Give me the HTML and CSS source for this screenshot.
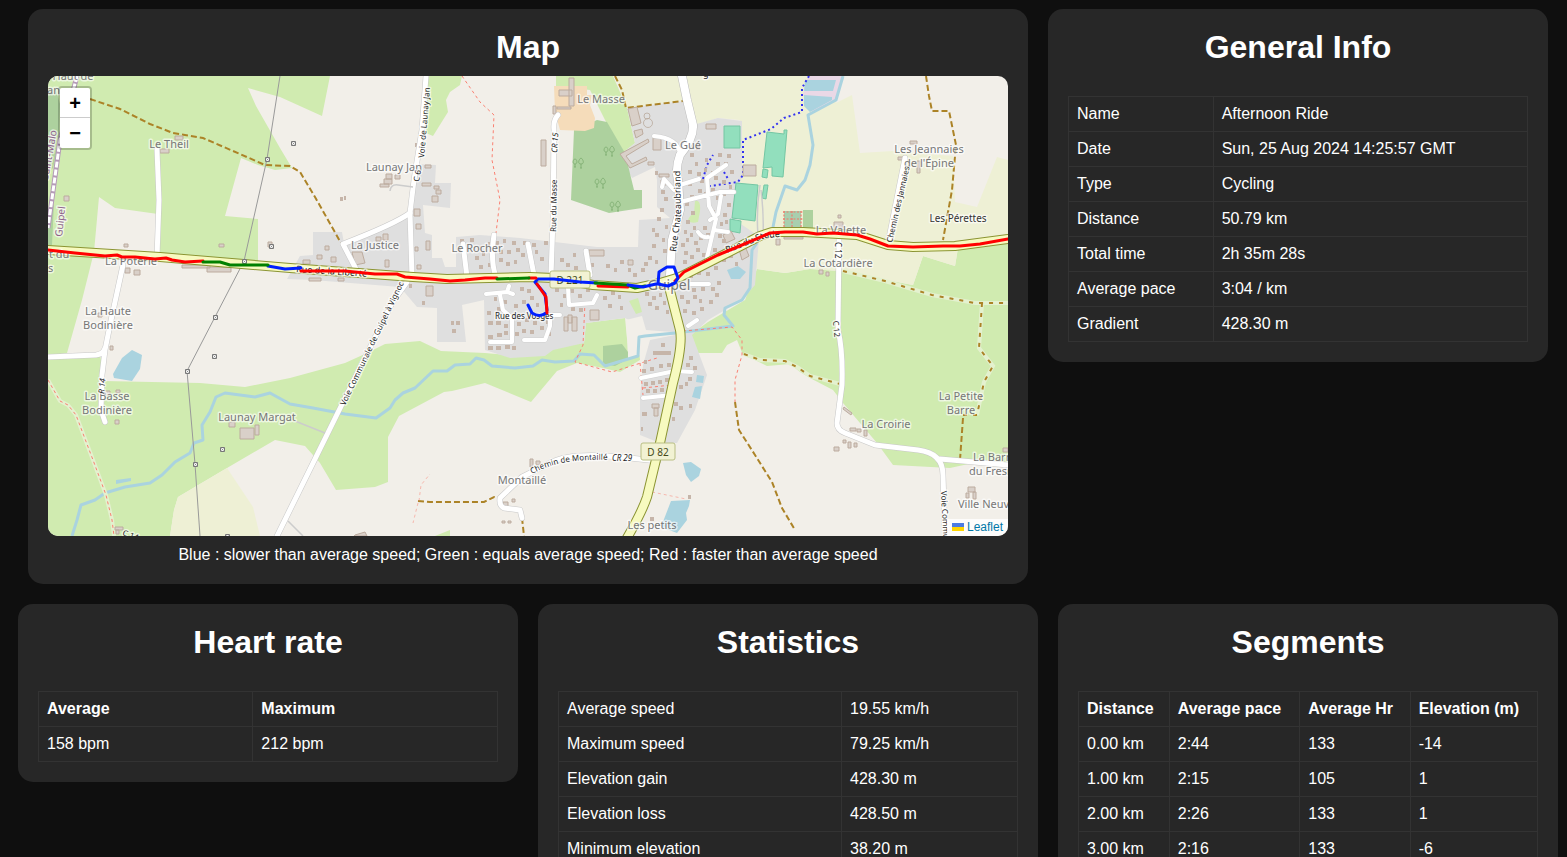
FILE: index.html
```html
<!DOCTYPE html>
<html lang="en">
<head>
<meta charset="utf-8">
<meta name="viewport" content="width=device-width, initial-scale=1">
<title>Afternoon Ride</title>
<link rel="stylesheet" href="styles.css">
</head>
<body>
<main class="page">
  <div class="row row-top">
    <section class="card">
      <h1>Map</h1>
      <div class="map">
        <svg class="map-canvas" viewBox="48 76 960 460" preserveAspectRatio="xMidYMid slice" role="img" aria-label="Map of the ride around Guipel">
          <defs>
            <g id="pylon"><path d="M-1.500-1.500h4v4h-4z" fill="#f6f6f6" stroke="#777"/><path d="M-.5-.5l2 2M1.500-.5l-2 2" stroke="#888" stroke-width=".8"/></g>
            <g id="trees" fill="none" stroke="#7fae72" stroke-width=".9"><path d="M0 0v-3M-1 0h2M0-3c-3 0-2-5 0-5s3 5 0 5M6 1v-4M5 1h2M6-3c-4 0-2-5 0-6 2 1 4 6 0 6"/></g>
            <g id="minor-roads">
              <path d="M426 76L422 130 414 180 410 213 412 277"/>
              <path d="M410 213Q395 224 343 244L358 273M157 150L159 200 157 257M123 265L110 325 105 350 102 375 101 410 105 422M48 357L96 355Q104 354 105 348"/>
              <path d="M558 115Q553 120 554 130L553 220 551 275M528 244L534 275M586 251L590 275M494 235Q490 260 496 277M463 244L467 277M905 158L888 243M658 461L620 457Q570 452 550 463L522 477 500 498Q499 506 504 508L520 510 522 518M1008 465L940 459"/>
              <path d="M407 282L392 303 277 536M839 237L838 330Q843 350 842 385L837 423Q837 430 845 433L875 445 918 450Q943 453 943 475L945 536"/>
            </g>
            <g id="lanes">
              <path d="M674 190L664 179 662 187M680 185L699 179M680 202L720 192 734 192M726 165L707 178 709 206 716 219 707 258M721 196L718 214 710 220M698 232Q702 238 708 237M714 230L728 232M680 154Q678 138 654 136M509 286L507 292 486 294M507 292L513 294M500 295L503 310 512 318V342H490M568 288L569 305 593 303 597 295M524 340H545L550 326V315H560M688 326L697 320M641 378L675 371 692 372M643 398L672 395M690 284L709 284"/>
            </g>
            <path id="road-north" d="M682 76L687 100 693 125Q694 138 680 155 675 168 678 180L680 210 672 240 670 275"/>
            <g id="main-roads"><path d="M48 250L160 257 290 268 413 277 447 279 530 277 553 278 593 285 637 288 660 283 680 277 727 253 760 236 772 232 803 232 857 235 888 245 913 247 955 246 1008 239"/><path d="M668 283L680 330Q683 345 673 383L660 443 647 497Q642 512 627 538"/></g>
            <path id="p-launay" d="M424 158L431 76"/><path id="p-chateau" d="M676 252L681 215 680 160"/><path id="p-vignoc" d="M345 406L404 283"/><path id="p-mont" d="M532 474Q560 458 608 460"/><path id="p-stade" d="M727 253L765 238 792 236"/>
          </defs>
          <path class="land" d="M48 76h960v460H48z"/>
          <!-- meadows -->
          <g class="meadow">
            <path d="M48 76H330L322 116 280 97 248 88 256 106 280 148 292 168 275 170 258 165 241 158 225 216 258 219V266L160 258 158 214 115 208 99 197 94 252 82 300 67 353 48 356z"/>
            <path d="M48 356L100 354 104 381 200 383 245 387 290 378 345 363 367 353 385 344 420 341 441 351 485 353 520 356 542 350 563 345 584 343 586 323 625 318 627 338 638 340 640 360 620 372 603 368 577 363 557 371 531 402 485 383 452 391 444 392 399 416 388 437V482L375 487 336 490 320 463 305 446 275 440 227 468 178 497 174 510 170 536H48z"/>
            <path d="M556 76H613L627 108 635 143 624 152 605 120 590 90 556 86z"/>
            <path d="M427 76H462L460 85 450 92 446 100 448 112 433 136 426 133z"/>
            <path d="M757 269L785 273 810 269 840 271 913 285 923 256 955 266 958 248 1008 243V462L973 463 950 468 893 465 877 443 860 423 843 403 833 390 810 378 800 372 790 364 767 366 753 359 743 355 737 340 727 345 722 353H695L690 335 708 322 745 300z"/>
            <path d="M435 536L450 530V536z"/>
          </g>
          <g class="farmland">
            <path d="M615 76H844L836 103 852 95 860 153 893 151 953 156 955 202 977 207 997 157 1008 160V243L958 248 955 266 923 256 913 285 840 271 810 269 785 273 757 269 740 240V120L718 118 695 125 683 101 627 108z"/>
            <path d="M227 468L253 507 260 536H170L174 510 178 497z"/>
          </g>
          <g class="residential">
            <path d="M287 279L300 256 313 255V232H342L344 243 408 213 415 164 436 165 435 183H451L450 208 423 205 425 233 432 235V258H442L445 267H456V237L480 235 520 238 563 243 597 247H638L639 220 670 218 657 207V180L655 167 632 178 620 155 635 143 627 108 683 101 693 125 718 118 742 121V178L735 190V220L757 235 759 240 755 285 742 300 708 320 692 335 707 375 695 410 677 443 660 443 640 435V397L643 365 650 340 675 335 645 335 645 328 625 318 586 323 584 343 553 350 545 356 510 358 485 350 484 300 462 305 466 342H437V308L417 307 400 287 313 280z"/>
          </g>
          <path class="land" d="M626 320L642 316 646 330 672 332 671 335 642 337 641 355 628 358z"/>
          <g class="forest">
            <path d="M574 130L597 120 607 122 625 153 634 190H642V208L609 213 571 200z"/>
            <path d="M603 346L622 344 628 352V359L615 366 603 364z"/>
            <path d="M48 88L56 90 60 104 59 140 53 168 48 173zM54 203L52 245 48 247V220z"/>
            <path d="M803 210h10v18h-10z"/>
          </g>
          <use href="#trees" x="575" y="167"/><use href="#trees" x="606" y="155"/><use href="#trees" x="597" y="187"/><use href="#trees" x="612" y="210"/>
          <path class="farmyard" d="M554 86H587V95H592L590 105 595 118 594 128 585 131 560 130 555 112z"/>
          <path fill="#ead8e6" d="M808 76H843L836 101 812 112 803 95z"/>
          <g class="pitch">
            <path d="M724 126h16v22h-16zM767 132L784 134V130H787L783 177 772 176V167L763 168zM736 183L758 185 755 221 732 218zM730 219L741 221 740 233 730 231zM763 169L768 170 767 178 762 177zM764 185L768 185 766 199 762 198z"/>
            <path d="M784 211h17v16h-17z" fill="#a8cfae" stroke="none"/>
          </g>
          <path d="M783 212H803M783 219H803M784 211V228M792 211V228M801 211V228" fill="none" stroke="#ef7b6b" stroke-width="1.2" stroke-dasharray="2 1.5"/>
          <path class="meadow" d="M695 201q6-2 5 10l-2 11q-6 2-10-1 0-4 6-8zM629 301l9-3 4 14-6 2z"/>
          <!-- water -->
          <g class="water">
            <path d="M805 80H836L833 91H804zM804 95L832 97 832 100 810 112 804 106z"/>
            <path d="M132 350L142 355 140 369 132 381 114 378 113 374 122 358z"/>
            <path d="M116 480L131 478V481L116 484z"/>
            <path d="M727 270L738 266 746 272 740 279 731 279z"/>
            <path d="M697 375L704 376 703 383 696 382zM695 387L702 386 700 399 692 397z"/>
            <path d="M683 463L691 462 701 469 699 476 691 482 686 475z"/>
            <path d="M671 501L690 500 689 506 686 513 687 520 677 533 661 527z"/>
          </g>
          <path class="river" d="M72 536L77 520 81 505 95 500 105 493 125 487 150 483 162 475 175 462 190 453 194 443 203 440 202 425 210 412 216 397 225 393 255 397 270 393 290 404 313 408 345 414 376 418 390 408 395 400 403 393 415 388 433 371 447 371 455 365 470 364 476 358 484 360 492 366 515 368 533 366 542 360 555 362 574 361 580 354 594 355 605 366 638 356 639 337 645 336 675 333 733 326 724 315 725 308 742 300 750 288 752 250 757 243M773 227L776 212 785 186 797 190 805 180 810 165 813 145 808 115 836 100 843 76"/>
          <!-- tracks and paths -->
          <g class="track-case">
            <path d="M843 271L885 281 932 295 975 303H1008M982 303L979 348 993 366 984 382 977 415M744 354L760 360 785 361 797 367 810 376 840 384"/>
            <path d="M48 380L60 401 68 405 76 415 93 460 106 495 112 520 114 536"/>
          </g>
          <g class="track">
            <path d="M90 99L120 109 150 124 173 133 203 138 240 154 265 165 290 166 300 172 315 197 341 243"/>
            <path d="M615 76L622 90 626 108 683 101"/>
            <path d="M926 76L929 96 932 111H949L956 145 952 190 943 240"/>
            <path d="M963 418L960 460M735 402L739 430 755 455 772 482 782 508 795 530"/>
            <path d="M418 501L430 502H484L494 497 500 500M522 518L524 536"/>
          </g>
          <path class="track sparse" d="M843 271L885 281 932 295 975 303H1008M982 303L979 348 993 366 984 382 977 415H963M744 354L760 360 785 361 797 367 810 376 840 384"/>
          <g class="footpath">
            <path d="M462 76L480 102 494 115 492 160 500 200 496 233"/>
            <path d="M48 380L60 401 68 405 76 415 93 460 106 495 112 520 114 536"/>
            <path d="M585 302L583 345 575 362 612 372 657 358M640 363L643 395M643 388L672 385"/>
            <path d="M683 331L732 327 742 340 742 355 735 380 735 402"/>
            <path d="M419 501L421 485 430 474M418 503L413 523M652 492L686 499" opacity=".5"/>
          </g>
          <path class="cycle-path" d="M809 76L802 88V112L784 118 771 129 743 140V175L738 182 710 186M703 179L707 165 713 155M724 172L728 179"/>
          <path d="M280 76L267 159 244 261 187 371 195 464 200 536" fill="none" stroke="#999"/>
          <!-- buildings -->
          <path class="building" d="M160 149h9v4h-9zM175 136h8v4h-8zM64 196h5v5h-5zM125 268h5v5h-5zM134 270h6v5h-6zM182 265h28v3h-28zM207 267h24v5h-24zM219 244h5v3h-5zM124 244h4v3h-4zM268 242h4v5h-4zM384 179h8v5h-8zM395 175h5v4h-5zM386 174h6v5h-6zM380 184h9v3h-9zM425 165h6v3h-6zM422 183h9v3h-9zM434 186h5v3h-5zM436 190h5v4h-5zM432 196h6v6h-6zM414 209h6v7h-6zM416 224h5v5h-5zM426 241h4v9h-4zM415 247h3v4h-3zM417 265h4v4h-4zM352 252l10 0 3 11-10 2zM376 237h5v4h-5zM383 234h5v6h-5zM385 260h4v7h-4zM317 255h5v4h-5zM331 257h5v5h-5zM325 246h4v4h-4zM338 278h6v3h-6zM309 278h12v3h-12zM426 286h7v10h-7zM303 260h7v4h-7z"/>
          <path class="building" d="M559 90h13v6h-13zM569 78h5v28h-5zM557 107h14v2h-14zM541 140h5v26h-5zM553 106h3v8h-3zM628 109l9-2 4 16-9 3zM634 131l8-2 1 5-7 4zM620 154l28-15 1 3-23 14 6 8 14-7 1 3-17 8zM653 138h8v12h-8zM648 162h6v3h-6zM706 124h10v5h-10zM743 165h13v11h-13zM659 174h10v3h-10zM661 180h5v5h-5zM723 235l8-4 4 8-9 4zM739 249l6-3 4 10-7 4zM589 250h15v6h-15zM628 260h5v5h-5zM564 317h4v14h-4zM572 317h5v14h-5zM568 315h4v8h-4zM590 310h9v10h-9zM652 404h7v4h-7zM654 408h4v8h-4zM240 428h14v11h-14zM255 425h4v10h-4zM229 422h6v5h-6zM968 487h7v5h-7zM973 492h3v7h-3zM966 493h3v5h-3zM834 447h5v4h-5zM844 407l8 6-1 2-8-6zM864 430h3v6h-3zM850 428h6v3h-6zM857 429h4v3h-4zM843 440h3v3h-3zM848 442h3v6h-3zM854 443h3v4h-3zM834 222h9v6h-9zM838 215h3v3h-3zM776 239h4v6h-4zM784 237h19v2h-19zM910 141h7v3h-7zM898 157h7v3h-7zM917 161h3v12h-3zM819 270h4v4h-4zM826 272h3v4h-3zM115 420h4v4h-4zM104 391h6v4h-6zM116 390h4v3h-4zM110 346h3v4h-3zM98 313h4v4h-4zM530 459h3v8h-3zM536 461h4v4h-4zM503 502h5v4h-5zM512 499h3v3h-3zM502 521h3v2h-3zM508 521h3v2h-3zM115 527h8v3h-8zM116 530h3v4h-3zM355 535l10-3 2 4h-13zM1003 448h5v4h-5z"/>
          <g class="house">
            <path d="M460 241h4M470 240h4M478 248h4M488 244h3M495 243h4M503 241h3M512 243h4M459 250h4M475 258h4M482 254h3M499 252h4M507 252h4M516 250h4M523 243h3M479 267h4M488 265h3M499 260h4M506 264h4M514 262h3M521 255h4M484 294h4M494 299h3M503 302h4M512 294h3M520 289h4M527 291h4M514 306h4M522 302h4M530 298h4M536 305h3M487 313h4M497 309h4M517 324h4M525 320h4M533 323h4M488 323h5M496 323h5M504 326h4M488 337h5M497 335h5M504 333h4M515 334h4M522 331h4M530 332h4M488 348h5M496 348h5M505 347h5M512 348h4M540 328h4M546 322h3M548 334h3"/>
            <path d="M532 245h4M535 252h3M540 259h4M544 243h4M532 265h3M560 260h4M566 265h4M573 255h3M574 268h4M590 265h4M606 266h4M614 270h3M620 262h4M628 270h3M633 275h4M644 264h4M641 270h4M648 258h4M655 262h3M655 235h4M652 246h4M662 240h3M663 251h4M657 219h4M660 210h4M652 230h3M665 227h3M681 245h4M684 253h4M683 262h4M690 257h4M696 250h4M702 255h4M694 243h4M690 235h3M699 238h4M686 222h4M691 213h4M693 228h3M703 228h4M706 235h4M685 204h4M690 197h4M698 191h4M704 194h3M711 190h4M716 198h3M722 194h4M727 205h4M712 212h3M723 215h4M720 224h3M718 236h4M722 241h4M713 250h4M711 259h3M699 265h4"/>
            <path d="M688 172h4M697 174h4M704 170h3M711 173h4M716 164h4M727 156h4M724 164h4M730 172h4M714 178h4M722 182h4M729 187h3M700 181h4M688 184h4M695 164h3M690 155h4M696 148h4M705 160h3M718 155h4M661 192h4M664 199h4M655 173h3M725 222h3M684 232h3M686 240h3"/>
            <path d="M555 290h4M563 296h4M570 291h4M578 296h4M586 290h4M560 305h3M571 309h4M579 310h4M603 298h4M611 293h4M618 297h3M608 306h4M620 308h3M645 294h4M652 298h4M659 295h3M648 304h4M655 308h4M663 303h3M666 312h3M680 297h4M686 302h4M693 297h4M699 301h3M683 311h4M692 313h4M700 309h4M709 302h4M715 295h4M683 288h4M692 290h4M701 289h4M711 289h4M717 283h4M689 276h4M697 273h4M706 274h4M714 268h4M722 260h4M729 256h4M735 264h3"/>
            <path d="M642 371h4M650 369h4M659 366h4M667 365h4M653 353h18M661 345h4M644 384h4M651 383h4M658 382h4M665 380h4M646 391h4M653 391h4M660 390h4M689 358h4M686 365h4M688 379h4M679 387h4M685 384h3M642 414h5M674 404h4M679 408h4M672 419h3M689 406h3M641 429h2M693 368h4M644 362h3"/>
            <path d="M340 199h3M344 198h2M415 145h2M410 253h2M409 286h3M422 303h3M451 323h3M456 323h4M452 331h4M650 519h4M688 497h3"/>
          </g>
          <g fill="none" stroke="#b9a99c" stroke-width=".8"><circle cx="647" cy="116" r="3"/><circle cx="648" cy="123" r="4.500"/></g>
          <!-- minor roads -->
          <use href="#minor-roads" class="minor-case"/><use href="#lanes" class="lane-case"/><use href="#road-north" class="big-case"/>
          <use href="#minor-roads" class="minor"/><use href="#lanes" class="lane"/><use href="#road-north" class="big"/>
          <path d="M390 191Q391 184 398 185L413 187M295 421L325 433M288 521L303 536M758 235Q756 210 760 185M763 235Q764 215 761 190" fill="none" stroke="#ccc" stroke-width="1.500"/>
          <!-- departmental roads -->
          <path class="rail-case" d="M77 76L60 140 48 228"/><path class="rail" d="M77 76L60 140 48 228"/>
          <use href="#main-roads" class="main-case"/><use href="#main-roads" class="main"/>
          <use href="#pylon" x="267" y="159"/><use href="#pylon" x="293" y="143"/><use href="#pylon" x="271" y="246"/><use href="#pylon" x="244" y="261"/><use href="#pylon" x="215" y="317"/><use href="#pylon" x="214" y="356"/><use href="#pylon" x="187" y="371"/><use href="#pylon" x="222" y="449"/><use href="#pylon" x="195" y="464"/><use href="#pylon" x="227" y="536"/>
          <!-- place and road labels -->
          <path class="shield" d="M643 443h30q2 0 2 2v13q0 2-2 2h-30q-2 0-2-2v-13q0-2 2-2zM552 271h36q2 0 2 2v13q0 2-2 2h-36q-2 0-2-2v-13q0-2 2-2z"/>
          <g class="shield-text"><text x="658" y="456">D 82</text><text x="570" y="284">D 221</text></g>
          <g class="place">
            <text x="73" y="80">Haut de</text><text x="47" y="94" text-anchor="start">an</text>
            <text x="169" y="148">Le Theil</text><text x="394" y="171">Launay Jan</text><text x="375" y="249">La Justice</text><text x="477" y="252">Le Rocher</text>
            <text x="601" y="103">Le Masse</text><text x="683" y="149">Le Gué</text><text x="929" y="153">Les Jeannaies</text><text x="929" y="167">de l'Épine</text>
            <text x="841" y="234">La Valette</text><text x="838" y="267">La Cotardière</text><text x="131" y="265">La Poterie</text><text class="start" x="49" y="258">t du</text><text class="start" x="48" y="272">s</text>
            <text x="108" y="315">La Haute</text><text x="108" y="329">Bodinière</text><text x="107" y="400">La Basse</text><text x="107" y="414">Bodinière</text>
            <text x="257" y="421">Launay Margat</text><text x="522" y="484">Montaillé</text><text x="652" y="529">Les petits</text>
            <text x="886" y="428">La Croirie</text><text x="961" y="400">La Petite</text><text x="961" y="414">Barre</text>
            <text class="start" x="973" y="461">La Barre</text><text class="start" x="969" y="475">du Fresne</text><text class="start" x="958" y="508">Ville Neuve</text>
            <text class="town" x="669" y="290">Guipel</text><text class="dark" x="958" y="222">Les Pérettes</text>
          </g>
          <g class="border-label"><text transform="translate(62 237)rotate(-84)">Guipel</text><text transform="translate(48 180)rotate(-80)">Saint-Malo</text></g>
          <g class="road-label">
            <text><textPath href="#p-launay">Voie de Launay Jan</textPath></text><text class="wide"><textPath href="#p-chateau">Rue Chateaubriand</textPath></text><text><textPath href="#p-vignoc">Voie Communale de Guipel à Vignoc</textPath></text><text><textPath href="#p-mont">Chemin de Montaillé</textPath></text><text class="wide"><textPath href="#p-stade">Rue du Stade</textPath></text>
            <text transform="translate(419 182)rotate(-80)">C 6</text><text transform="translate(556 232)rotate(-89)">Rue du Masse</text><text class="italic" transform="translate(557 153)rotate(-86)">CR 15</text>
            <text x="612" y="461" class="italic">CR 29</text><text transform="translate(892 243)rotate(-77)">Chemin des Jannaies</text>
            <text transform="translate(835 242)rotate(90)">C 12</text><text transform="translate(833 321)rotate(85)">C 12</text><text transform="translate(941 491)rotate(87)">Voie Communale</text><text class="italic" transform="translate(104 394)rotate(-85)">R 14</text>
            <text x="495" y="319">Rue des Vosges</text><text transform="translate(296 272)rotate(4)" class="wide">Rue de la Liberté</text><text transform="translate(122 535)rotate(20)">C 14</text><text class="wide" x="703" y="77">g</text>
          </g>
          <!-- ride, coloured by speed -->
          <g class="ride">
            <path class="slow" d="M268 266L285 269 301 268M546 313Q540 318 532 313L528 305M547 310L545 294 535 282 538 279 554 279 580 282 597 283"/>
            <path class="fast" d="M48 250L75 253 105 256 117 255 122 257 135 257 155 259 166 258 172 260 185 262 203 261M301 271H345L375 274H397L405 277 430 279 450 281 465 280 485 278H497M529 278H536M537 284L546 297 547 313M598 286L628 287"/>
            <path class="average" d="M203 262H220L230 265H268M497 279L529 278M595 283L628 285M630 286L635 288 645 286"/>
            <path class="fast" d="M675 281L684 272 718 255 735 248 770 233 785 232H803L817 234 833 233 857 235 870 239 888 246 913 247 943 246H960L980 244 1008 239"/>
            <path class="slow" d="M628 285L643 287 656 284H658L659 272 667 267H674L678 278 675 283 668 286 658 284"/>
          </g>
        </svg>
        <div class="zoom-control">
          <button type="button" aria-label="Zoom in">+</button>
          <button type="button" aria-label="Zoom out">−</button>
        </div>
        <div class="attribution"><a href="https://leafletjs.com"><svg class="flag" viewBox="0 0 12 8" aria-hidden="true"><path fill="#4c7be1" d="M0 0h12v4H0z"/><path fill="#ffd500" d="M0 4h12v4H0z"/></svg> Leaflet</a></div>
      </div>
      <p class="legend">Blue : slower than average speed; Green : equals average speed; Red : faster than average speed</p>
    </section>
    <section class="card">
      <h1>General Info</h1>
      <table>
        <tr><td>Name</td><td>Afternoon Ride</td></tr>
        <tr><td>Date</td><td>Sun, 25 Aug 2024 14:25:57 GMT</td></tr>
        <tr><td>Type</td><td>Cycling</td></tr>
        <tr><td>Distance</td><td>50.79 km</td></tr>
        <tr><td>Total time</td><td>2h 35m 28s</td></tr>
        <tr><td>Average pace</td><td>3:04 / km</td></tr>
        <tr><td>Gradient</td><td>428.30 m</td></tr>
      </table>
    </section>
  </div>
  <div class="row row-stats">
    <section class="card">
      <h1>Heart rate</h1>
      <table>
        <tr><th>Average</th><th>Maximum</th></tr>
        <tr><td>158 bpm</td><td>212 bpm</td></tr>
      </table>
    </section>
    <section class="card">
      <h1>Statistics</h1>
      <table class="stats-table">
        <tr><td>Average speed</td><td>19.55 km/h</td></tr>
        <tr><td>Maximum speed</td><td>79.25 km/h</td></tr>
        <tr><td>Elevation gain</td><td>428.30 m</td></tr>
        <tr><td>Elevation loss</td><td>428.50 m</td></tr>
        <tr><td>Minimum elevation</td><td>38.20 m</td></tr>
      </table>
    </section>
    <section class="card">
      <h1>Segments</h1>
      <table>
        <tr><th>Distance</th><th>Average pace</th><th>Average Hr</th><th>Elevation (m)</th></tr>
        <tr><td>0.00 km</td><td>2:44</td><td>133</td><td>-14</td></tr>
        <tr><td>1.00 km</td><td>2:15</td><td>105</td><td>1</td></tr>
        <tr><td>2.00 km</td><td>2:26</td><td>133</td><td>1</td></tr>
        <tr><td>3.00 km</td><td>2:16</td><td>133</td><td>-6</td></tr>
      </table>
    </section>
  </div>
</main>
</body>
</html>
```
FILE: styles.css
```css
* { box-sizing: border-box; }

body {
  margin: 0;
  height: 100vh;
  overflow: hidden;
  background: #0f0f0f;
  color: #fff;
  font: 16px/18px "Liberation Sans", Arial, sans-serif;
}

.page {
  display: flex;
  flex-direction: column;
  gap: 20px;
  padding: 9px 9px 20px 18px;
}

.row { display: grid; gap: 20px; align-items: start; }
.row-top { grid-template-columns: 2fr 1fr; padding: 0 10px; }
.row-stats { grid-template-columns: repeat(3, 1fr); }

.card {
  min-width: 0;
  padding: 20px;
  border-radius: 15px;
  background: #272727;
}

h1 {
  margin: 0 0 10px;
  font-size: 32px;
  line-height: 37px;
  text-align: center;
}

.legend { margin: 10px 0 0; text-align: center; }

table { width: 100%; margin-top: 30px; border-collapse: collapse; }
th, td { padding: 8px; border: 1px solid #333; text-align: left; }
.stats-table td:first-child { width: 283px; }

/* Map */
.map {
  position: relative;
  height: 460px;
  border-radius: 10px;
  overflow: hidden;
}
.map-canvas { display: block; width: 100%; height: 100%; }

.zoom-control {
  position: absolute;
  top: 10px;
  left: 10px;
  display: flex;
  flex-direction: column;
  border: 2px solid rgba(0, 0, 0, .2);
  border-radius: 4px;
  background-clip: padding-box;
}
.zoom-control button {
  width: 30px;
  height: 30px;
  padding: 0;
  border: 0;
  background: #fff;
  color: #000;
  font: bold 20px/30px "Liberation Sans", Arial, sans-serif;
}
.zoom-control button:first-child { border-bottom: 1px solid #ccc; border-radius: 2px 2px 0 0; }
.zoom-control button:last-child { border-radius: 0 0 2px 2px; }

.attribution {
  position: absolute;
  right: 0;
  bottom: 0;
  padding: 0 5px;
  background: rgba(255, 255, 255, .8);
  font-size: 12px;
  line-height: 17px;
}
.attribution a { color: #0078a8; text-decoration: none; }
.flag { width: 12px; height: 8px; }

.land { fill: #f2efe9; }
.meadow { fill: #d0ebb0; }
.farmland { fill: #eef0d5; }
.residential { fill: #dfdfdf; }
.forest { fill: #add19e; }
.farmyard { fill: #f5dcba; }
.pitch { fill: #92dfbd; stroke: #74c6a3; }
.water { fill: #aad3df; }
.river { fill: none; stroke: #aad3df; stroke-width: 3; stroke-linejoin: round; }
.building { fill: #d9d0c9; stroke: #bcab9e; stroke-width: 1; }
.house { fill: none; stroke: #c6b5a9; stroke-width: 4; }

.track-case { fill: none; stroke: #e4f1cf; stroke-width: 4; }
.track { fill: none; stroke: #ac8327; stroke-width: 2; stroke-dasharray: 6 3; }
.sparse { stroke-dasharray: 4 6; }
.footpath { fill: none; stroke: #fa8072; stroke-width: 1; stroke-dasharray: 3 3; }
.cycle-path { fill: none; stroke: #3232f0; stroke-width: 2; stroke-dasharray: 2 3; }

.minor-case, .minor, .lane-case, .lane, .big-case, .big, .main-case, .main { fill: none; stroke-linecap: round; stroke-linejoin: round; }
.minor-case { stroke: #c8c8c8; stroke-width: 6; }
.minor { stroke: #fff; stroke-width: 5; }
.lane-case { stroke: #d0d0d0; stroke-width: 5; }
.lane { stroke: #fff; stroke-width: 4; }
.big-case { stroke: #bbb; stroke-width: 9; }
.big { stroke: #fff; stroke-width: 8; }
.main-case { stroke: #8b9432; stroke-width: 10; }
.main { stroke: #f7fabf; stroke-width: 8; }
.rail-case { fill: none; stroke: #b59bb8; stroke-width: 5; }
.rail { fill: none; stroke: #fff; stroke-width: 3; stroke-dasharray: 6 2; }

.place, .road-label, .border-label {
  font-family: "Noto Sans", "Open Sans", sans-serif;
  paint-order: stroke;
  stroke: rgba(255, 255, 255, .6);
  stroke-width: 3px;
  stroke-linejoin: round;
}
.place { fill: #777; font-size: 11px; text-anchor: middle; }
.place .start { text-anchor: start; }
.place .town { font-size: 14px; }
.place .dark { fill: #333; font-size: 10px; }
.road-label { fill: #222; font-size: 8px; }
.road-label .wide { font-size: 9px; }
.road-label .italic { font-style: italic; }
.border-label { fill: #8d618b; font-size: 10px; }
.shield { fill: #f2f2d3; stroke: #b9bf84; }
.shield-text { fill: #454a18; font: 10px "Noto Sans", "Open Sans", sans-serif; text-anchor: middle; }

.ride { fill: none; stroke-width: 3; stroke-linecap: round; stroke-linejoin: round; }
.fast { stroke: #f00; }
.average { stroke: #008000; }
.slow { stroke: #0020ff; }
```
